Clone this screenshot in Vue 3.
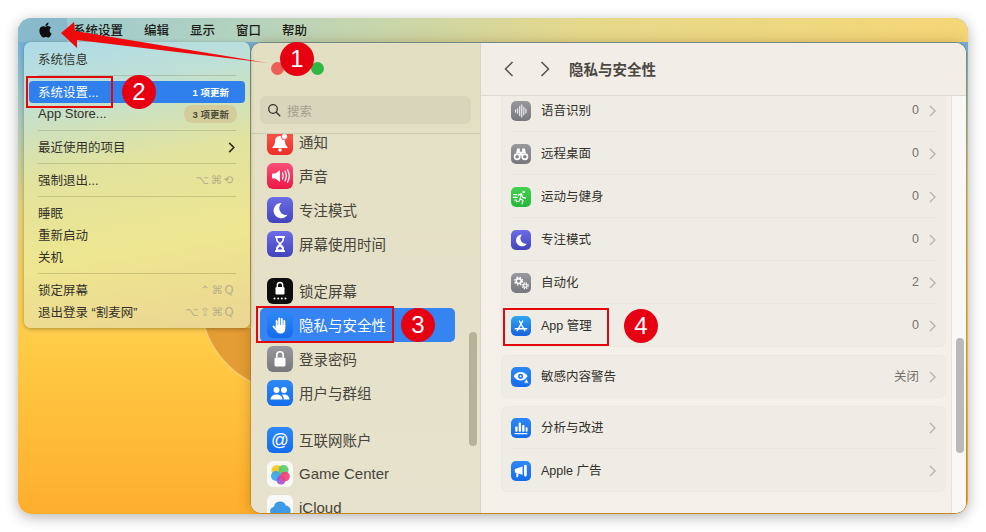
<template>
  <div class="page">
    <div class="screen">
      <svg class="wave" viewBox="0 0 60 60" width="60" height="60">
        <path d="M14 0C20 20 36 42 60 54V0z" fill="#e49c34" />
        <path d="M14 0C20 20 36 42 60 54" fill="none" stroke="#f6cf6e" stroke-width="1.5" />
      </svg>

      <div class="menubar">
        <span class="apple">
          <svg viewBox="0 0 24 24" width="15" height="16"><path :d="appleLogo" fill="#0d0d0d" /></svg>
        </span>
        <span v-for="m in menubar" :key="m" class="bar-item">{{ m }}</span>
      </div>

      <div class="window">
        <aside class="sidebar">
          <div class="lights">
            <i class="light red"></i>
            <i class="light yellow"></i>
            <i class="light green"></i>
          </div>
          <div class="search">
            <svg viewBox="0 0 14 14" width="14" height="14">
              <circle cx="6" cy="6" r="4.3" fill="none" stroke="#33322c" stroke-width="1.3" />
              <path d="M9.2 9.2l3.6 3.6" stroke="#33322c" stroke-width="1.4" stroke-linecap="round" />
            </svg>
            <span>搜索</span>
          </div>
          <div class="side-list">
            <div
              v-for="item in sideItems"
              :key="item.label"
              class="side-item"
              :class="{ active: item.active, spaced: item.spaced }"
            >
              <span class="ico" :class="item.bg">
                <svg viewBox="0 0 26 26" v-html="icons[item.icon]"></svg>
              </span>
              <span class="side-label" :class="{ latin: item.latin }">{{ item.label }}</span>
            </div>
          </div>
          <div class="side-thumb"></div>
        </aside>

        <main class="content">
          <header class="titlebar">
            <svg viewBox="0 0 10 16" width="10" height="16"><path d="M8.5 1L1.5 8l7 7" class="nav" /></svg>
            <svg viewBox="0 0 10 16" width="10" height="16"><path d="M1.5 1l7 7-7 7" class="nav" /></svg>
            <h1>隐私与安全性</h1>
          </header>
          <div class="body">
            <div class="scroller">
              <section v-for="(card, i) in cards" :key="i" class="card">
                <div v-for="row in card" :key="row.label" class="row">
                  <span class="ico small" :class="row.bg">
                    <svg viewBox="0 0 26 26" v-html="icons[row.icon]"></svg>
                  </span>
                  <span class="row-label">{{ row.label }}</span>
                  <span class="row-value">{{ row.value }}</span>
                  <svg class="chev" viewBox="0 0 7 12" width="7" height="12"><path d="M1 1l5 5-5 5" /></svg>
                </div>
              </section>
            </div>
            <div class="gutter"><div class="thumb"></div></div>
          </div>
        </main>
      </div>
    </div>

    <div class="menu">
      <template v-for="(m, i) in appleMenu" :key="i">
        <div v-if="m.sep" class="sep"></div>
        <div v-else class="menu-item" :class="{ hot: m.hot }">
          <span class="menu-label" :class="{ latin: m.latin }">{{ m.label }}</span>
          <span v-if="m.badge" class="badge" :class="{ pill: !m.hot }">{{ m.badge }}</span>
          <span v-if="m.keys" class="keys">{{ m.keys }}</span>
          <svg v-if="m.more" viewBox="0 0 7 12" width="7" height="11"><path d="M1 1l5 5-5 5" fill="none" stroke="#2e2c20" stroke-width="1.7" /></svg>
        </div>
      </template>
    </div>

    <!-- 标注 -->
    <svg class="arrow" viewBox="0 0 986 532" width="986" height="532">
      <polygon points="61,33 74,22 75,31 268,63 77,40 77,48" fill="#ee0a0a" />
    </svg>
    <div class="mark box2"></div>
    <div class="mark box3"></div>
    <div class="mark box4"></div>
    <div class="num n1">1</div>
    <div class="num n2">2</div>
    <div class="num n3">3</div>
    <div class="num n4">4</div>
  </div>
</template>

<script setup>
const appleLogo =
  'M12.152 6.896c-.948 0-2.415-1.078-3.96-1.04-2.04.027-3.91 1.183-4.961 3.014-2.117 3.675-.546 9.103 1.519 12.09 1.013 1.454 2.208 3.09 3.792 3.039 1.52-.065 2.09-.987 3.935-.987 1.831 0 2.35.987 3.96.948 1.637-.026 2.676-1.48 3.676-2.948 1.156-1.688 1.636-3.325 1.662-3.415-.039-.013-3.182-1.221-3.22-4.857-.026-3.04 2.48-4.494 2.597-4.559-1.429-2.09-3.623-2.324-4.39-2.376-2-.156-3.675 1.09-4.61 1.09zM15.53 3.83c.843-1.012 1.4-2.427 1.245-3.83-1.207.052-2.662.805-3.532 1.818-.78.896-1.454 2.338-1.273 3.714 1.338.104 2.715-.688 3.559-1.701'

const menubar = ['系统设置', '编辑', '显示', '窗口', '帮助']

const appleMenu = [
  { label: '系统信息' },
  { sep: true },
  { label: '系统设置...', badge: '1 项更新', hot: true },
  { label: 'App Store...', badge: '3 项更新', latin: true },
  { sep: true },
  { label: '最近使用的项目', more: true },
  { sep: true },
  { label: '强制退出...', keys: '⌥⌘⟲' },
  { sep: true },
  { label: '睡眠' },
  { label: '重新启动' },
  { label: '关机' },
  { sep: true },
  { label: '锁定屏幕', keys: '⌃⌘Q' },
  { label: '退出登录 “割麦网”', keys: '⌥⇧⌘Q' }
]

const icons = {
  bell: '<path d="M13 7c-3.6 0-5 2.8-5 5.6 0 2.8-1 4.2-2.6 5.6V19h15.2v-.8C19 16.8 18 15.400 18 12.600 18 9.800 16.600 7 13 7z" fill="#fff"/><circle cx="13" cy="21" r="1.7" fill="#fff"/><circle cx="17.500" cy="7.500" r="3.200" fill="#fff" stroke="#f6403a"/>',
  sound: '<path d="M5 10.500h3.500L13 7v12l-4.500-3.500H5z" fill="#fff"/><g fill="none" stroke="#fff" stroke-width="1.300" stroke-linecap="round"><path d="M15.500 10c1 1.900 1 4.100 0 6"/><path d="M18 8.300c1.700 3 1.700 6.400 0 9.400"/><path d="M20.500 6.800c2.300 4 2.300 8.400 0 12.400"/></g>',
  moon: '<path d="M14.500 6a7.600 7.600 0 1 0 6 11.800 6.900 6.900 0 0 1-6-11.800z" fill="#fff"/>',
  hourglass: '<path d="M8 5h10v1.800h-1v1.700c0 2.100-2 3.300-3 4.500 1 1.200 3 2.400 3 4.500v1.700h1V21H8v-1.800h1v-1.700c0-2.100 2-3.300 3-4.500-1-1.200-3-2.400-3-4.500V6.800H8z" fill="#fff"/><path d="M10.600 7h4.800v1.500c0 1.300-1.500 2.300-2.400 3.200-.900-.900-2.400-1.900-2.400-3.200zM10.800 18.500c.2-1.200 1.300-2 2.200-2.900.900.900 2 1.700 2.200 2.900z" fill="#5151cc"/>',
  lockBlack: '<rect x="8.500" y="9" width="9" height="7.500" rx="1.200" fill="#fff"/><path d="M10.300 9V7.200a2.700 2.700 0 0 1 5.400 0V9" fill="none" stroke="#fff" stroke-width="1.400"/><g fill="#fff"><circle cx="7.500" cy="20.500" r="1"/><circle cx="11.200" cy="20.500" r="1"/><circle cx="14.800" cy="20.500" r="1"/><circle cx="18.500" cy="20.500" r="1"/></g>',
  lock: '<rect x="7.500" y="11.500" width="11" height="9" rx="1.500" fill="#fff"/><path d="M9.800 11.500V9a3.200 3.200 0 0 1 6.400 0v2.500" fill="none" stroke="#fff" stroke-width="1.600"/>',
  hand: '<g stroke="#fff" stroke-width="1.900" stroke-linecap="round" fill="none"><path d="M9.700 14V9"/><path d="M12.200 13V6.500"/><path d="M14.800 13V7"/><path d="M17.300 14V9"/><path d="M9 17.500l-2.500-3"/></g><path d="M8.800 13h9.500v3.500c0 3.300-1.800 5-4.700 5s-4.200-1.500-4.800-4z" fill="#fff"/>',
  users: '<g fill="#fff"><circle cx="9.500" cy="10" r="3"/><circle cx="17" cy="10" r="3"/><path d="M3.500 19.500c.2-3.400 2.600-5 6-5s5.800 1.600 6 5z"/><path d="M16.800 19.500c0-2-.700-3.700-2-4.700.7-.2 1.400-.300 2.200-.300 3.200 0 5.300 1.600 5.500 5z"/></g>',
  at: '<text x="13" y="18.800" text-anchor="middle" font-family="Liberation Sans, sans-serif" font-size="17.500" fill="#fff">@</text>',
  game: '<circle cx="10" cy="9.500" r="5.500" fill="#f9c935"/><circle cx="16.500" cy="9" r="5" fill="#58c96b" opacity=".9"/><circle cx="9" cy="15" r="5" fill="#2fa8f0" opacity=".9"/><circle cx="14" cy="19" r="4.500" fill="#a44fd6" opacity=".9"/><circle cx="18" cy="15.500" r="4.800" fill="#f23e72" opacity=".9"/>',
  cloud: '<path d="M7.500 21a4.700 4.700 0 0 1-.6-9.300 6.300 6.300 0 0 1 12-1.300A5.400 5.400 0 0 1 19.500 21z" fill="#3c9ae6"/>',
  wave: '<g stroke="#fff" stroke-width="1.300" stroke-linecap="round"><path d="M6 11.500v3"/><path d="M8.700 10v6"/><path d="M11.400 7v12"/><path d="M14 5v16"/><path d="M16.700 8v10"/><path d="M19.400 10.500v5"/></g>',
  binoculars: '<g fill="#fff"><path d="M8 6h3.500v6H6.500zM14.500 6H18l1.500 6h-5z"/><circle cx="8" cy="16.500" r="4.500"/><circle cx="18" cy="16.500" r="4.500"/><rect x="11" y="10" width="4" height="5"/></g><circle cx="8" cy="16.500" r="2.300" fill="#85858d"/><circle cx="18" cy="16.500" r="2.300" fill="#85858d"/>',
  run: '<circle cx="16.500" cy="6.500" r="1.700" fill="#fff"/><g fill="none" stroke="#fff" stroke-width="1.600" stroke-linecap="round" stroke-linejoin="round"><path d="M9.500 10.500l4-1.500 2 4.500 3.500 1"/><path d="M13.500 9l-1.500 6 3.500 2.500-1 4.500"/><path d="M12 15.500l-1.500 3-3.500.5"/><path d="M3.500 10h4M3 13.500h5M5 17h2"/></g>',
  gears: '<circle cx="10" cy="10.500" r="3.200" fill="none" stroke="#fff" stroke-width="2"/><circle cx="10" cy="10.500" r="5" fill="none" stroke="#fff" stroke-width="1.800" stroke-dasharray="2 2"/><circle cx="18.500" cy="16.500" r="2.300" fill="none" stroke="#fff" stroke-width="1.700"/><circle cx="18.500" cy="16.500" r="3.900" fill="none" stroke="#fff" stroke-width="1.500" stroke-dasharray="1.600 1.500"/>',
  store: '<g stroke="#fff" stroke-width="1.800" stroke-linecap="round"><path d="M10.800 6.500L18 19"/><path d="M15.200 6.500L8 19"/><path d="M5.500 16.500h15"/></g>',
  eye: '<path d="M3.500 12c2.400-3.800 5.700-5.500 9-5.500s6.600 1.700 9 5.500c-2.400 3.800-5.700 5.500-9 5.500S5.900 15.800 3.500 12z" fill="#fff"/><circle cx="12.500" cy="12" r="3.300" fill="#1873ef"/><circle cx="12.500" cy="12" r="1.300" fill="#fff"/><path d="M20 15l3.500 6h-7z" fill="#fff" stroke="#1873ef"/>',
  bars: '<g fill="#fff"><rect x="5.500" y="11" width="3" height="7" rx="1"/><rect x="10" y="6" width="3" height="12" rx="1"/><rect x="14.500" y="9" width="3" height="9" rx="1"/><rect x="19" y="12" width="2.500" height="6" rx="1"/><rect x="4.500" y="19.500" width="17" height="1.500" rx=".7"/></g>',
  horn: '<g fill="#fff"><path d="M5 10.500l10-3.500v11L5 15z"/><rect x="17" y="5" width="3.500" height="15" rx="1.500"/><path d="M7 15.500l3 1-1 4.500H7z"/></g>'
}

const sideItems = [
  { label: '通知', icon: 'bell', bg: 'bg-red' },
  { label: '声音', icon: 'sound', bg: 'bg-pink' },
  { label: '专注模式', icon: 'moon', bg: 'bg-indigo' },
  { label: '屏幕使用时间', icon: 'hourglass', bg: 'bg-indigo' },
  { label: '锁定屏幕', icon: 'lockBlack', bg: 'bg-black', spaced: true },
  { label: '隐私与安全性', icon: 'hand', bg: 'bg-blue', active: true },
  { label: '登录密码', icon: 'lock', bg: 'bg-grey' },
  { label: '用户与群组', icon: 'users', bg: 'bg-blue' },
  { label: '互联网账户', icon: 'at', bg: 'bg-blue', spaced: true },
  { label: 'Game Center', icon: 'game', bg: 'bg-white', latin: true },
  { label: 'iCloud', icon: 'cloud', bg: 'bg-white', latin: true }
]

const cards = [
  [
    { label: '语音识别', icon: 'wave', bg: 'bg-grey', value: '0' },
    { label: '远程桌面', icon: 'binoculars', bg: 'bg-grey', value: '0' },
    { label: '运动与健身', icon: 'run', bg: 'bg-green', value: '0' },
    { label: '专注模式', icon: 'moon', bg: 'bg-indigo', value: '0' },
    { label: '自动化', icon: 'gears', bg: 'bg-grey', value: '2' },
    { label: 'App 管理', icon: 'store', bg: 'bg-sky', value: '0' }
  ],
  [{ label: '敏感内容警告', icon: 'eye', bg: 'bg-blue', value: '关闭' }],
  [
    { label: '分析与改进', icon: 'bars', bg: 'bg-blue', value: '' },
    { label: 'Apple 广告', icon: 'horn', bg: 'bg-blue', value: '' }
  ]
]
</script>

<style>
html,
body {
  margin: 0;
  background: #fff;
}
</style>

<style scoped>
.page {
  position: relative;
  width: 986px;
  height: 532px;
  padding: 18px;
  box-sizing: border-box;
  overflow: hidden;
  background: #fff;
  font-family: "Liberation Sans", "Noto Sans CJK SC", sans-serif;
  font-size: 12.5px;
  color: #33312a;
}

.screen {
  position: relative;
  width: 950px;
  height: 496px;
  border-radius: 14px;
  overflow: hidden;
  background: linear-gradient(180deg, #6db2dc 4%, #a9c8bb 20%, #e5d27c 38%, #ffcc47 65%, #feae2c 100%);
  box-shadow: 0 3px 14px rgba(0, 0, 0, 0.3);
}

.wave {
  position: absolute;
  left: 173px;
  top: 310px;
}

.menubar {
  position: relative;
  display: flex;
  align-items: center;
  gap: 21px;
  height: 24px;
  font-weight: 500;
  color: #1b1b18;
  background: linear-gradient(90deg, #97c8d4, #b6d3bd 25%, #e6d98b 60%, #f5d676 100%);
}

.bar-item {
  margin-top: -2px;
}

.apple {
  display: flex;
  align-items: center;
  height: 24px;
  padding: 0 14px 0 20px;
  margin-right: -15px;
  background: #88bacb;
}

.window {
  position: relative;
  display: flex;
  height: 470px;
  margin: 1px 2px 0 233px;
  border-radius: 10px;
  overflow: hidden;
  background: #f4f0e9;
  box-shadow: 0 0 0 0.5px rgba(110, 80, 10, 0.55), 0 0 14px rgba(120, 70, 0, 0.35);
}

.sidebar {
  position: relative;
  display: flex;
  flex-direction: column;
  flex: none;
  width: 230px;
  box-sizing: border-box;
  background: linear-gradient(180deg, #e3dfc2, #e7e2cd);
  border-right: 1px solid #d9d5c4;
}

.lights {
  display: flex;
  gap: 7px;
  height: 53px;
  padding: 19px 0 0 20px;
  box-sizing: border-box;
}

.light {
  width: 13px;
  height: 13px;
  border-radius: 50%;
}

.red {
  background: #ec5f57;
}

.yellow {
  background: #f5bf4f;
}

.green {
  background: #2fb944;
}

.search {
  display: flex;
  align-items: center;
  gap: 6px;
  flex: none;
  width: 211px;
  height: 28px;
  margin-left: 9px;
  padding-left: 7px;
  box-sizing: border-box;
  border-radius: 6px;
  background: #d9d5ba;
  color: #a4a08c;
}

.side-list {
  flex: 1;
  min-height: 0;
  margin-top: 9px;
  padding: 0 0 0 9px;
  overflow: hidden;
  border-top: 1px solid #cfcbb2;
}

.side-item {
  display: flex;
  align-items: center;
  gap: 6px;
  width: 195px;
  height: 34px;
  padding-left: 7px;
  box-sizing: border-box;
  border-radius: 5px;
  font-size: 14.5px;
  color: #47453b;
  position: relative;
  top: -9px;
}

.side-label {
  margin-top: -2px;
}

.side-label.latin {
  font-size: 15px;
}

.side-item.spaced {
  margin-top: 13px;
}

.side-item.active {
  background: #3584f2;
  color: #fff;
}

.side-thumb {
  position: absolute;
  left: 218px;
  top: 289px;
  width: 8px;
  height: 114px;
  border-radius: 4px;
  background: #b6b29c;
}

.ico {
  display: flex;
  flex: none;
  width: 26px;
  height: 26px;
  border-radius: 6px;
}

.ico.small {
  width: 20px;
  height: 20px;
  border-radius: 5px;
}

.ico svg {
  width: 100%;
  height: 100%;
}

.bg-red {
  background: linear-gradient(180deg, #fa5a50, #ee2e28);
}

.bg-pink {
  background: linear-gradient(180deg, #fb5078, #ec1748);
}

.bg-indigo {
  background: linear-gradient(180deg, #6c6ce8, #4343bb);
}

.bg-black {
  background: #0d0d0d;
}

.bg-blue {
  background: linear-gradient(180deg, #2d88f5, #146cec);
}

.bg-grey {
  background: linear-gradient(180deg, #98989e, #77777e);
}

.bg-white {
  background: #f8f8f6;
}

.bg-green {
  background: linear-gradient(180deg, #43d250, #24b738);
}

.bg-sky {
  background: linear-gradient(180deg, #2fa6f2, #1662dd);
}

.content {
  display: flex;
  flex-direction: column;
  flex: 1;
  min-width: 0;
}

.titlebar {
  display: flex;
  align-items: center;
  height: 52px;
  padding-left: 23px;
  flex: none;
  gap: 26px;
  background: #f2ede6;
  border-bottom: 1px solid #dedad2;
}

.titlebar h1 {
  margin: -2px 0 0 -7px;
  font-size: 14.5px;
  font-weight: 700;
  color: #4a4843;
}

.nav {
  fill: none;
  stroke: #55534e;
  stroke-width: 1.5;
}

.body {
  display: flex;
  flex: 1;
  min-height: 0;
}

.scroller {
  flex: 1;
  min-width: 0;
  overflow: hidden;
  padding: 0 5px 0 20px;
}

.card {
  display: flex;
  flex-direction: column;
  border-radius: 7px;
  background: #efece5;
  box-shadow: inset 0 0 0 1px #ebe8e0;
  margin-bottom: 8px;
}

.card:first-child {
  margin-top: -7px;
}

.row {
  display: flex;
  align-items: center;
  gap: 10px;
  height: 43px;
  margin: 0 10px;
  color: #32302b;
}

.row + .row {
  box-shadow: 0 -1px 0 #e9e6de;
}

.row-label {
  flex: 1;
  margin-top: -2px;
}

.row-value {
  margin-top: -2px;
  color: #75736d;
}

.chev {
  flex: none;
  fill: none;
  stroke: #b7b4ac;
  stroke-width: 1.4;
}

.gutter {
  flex: none;
  width: 15px;
  padding: 242px 0 0 4px;
  box-sizing: border-box;
  background: #f9f8f6;
  border-left: 1px solid #e6e3dc;
}

.thumb {
  width: 8px;
  height: 115px;
  border-radius: 4px;
  background: #b9b9b9;
}

.menu {
  position: absolute;
  left: 24px;
  top: 42px;
  display: flex;
  flex-direction: column;
  width: 226px;
  padding: 6px 0 5px;
  box-sizing: border-box;
  border-radius: 7px;
  background: linear-gradient(170deg, #aedbe9 0%, #bfe0d5 18%, #e2e39f 42%, #eee690 70%, #ebd592 100%);
  box-shadow: 0 1px 4px rgba(0, 0, 0, 0.3);
  color: #33312a;
}

.sep {
  height: 1px;
  margin: 5px 14px;
  background: rgba(120, 115, 70, 0.28);
}

.menu-item {
  display: flex;
  align-items: center;
  justify-content: space-between;
  height: 22px;
  margin: 0 5px;
  padding: 0 10px 0 9px;
  border-radius: 4px;
}

.menu-label {
  margin-top: -2px;
}

.menu-label.latin {
  font-size: 13px;
}

.menu-item.hot {
  background: #2f80ed;
  color: #fff;
}

.badge {
  font-size: 9.5px;
  font-weight: 700;
  margin-right: 6px;
}

.badge.pill {
  padding: 2px 8px 2px 9px;
  margin-right: -2px;
  border-radius: 8px;
  background: #d3cd9c;
  color: #4f4d3c;
}

.keys {
  font-family: "DejaVu Sans", sans-serif;
  font-size: 11.5px;
  letter-spacing: 1.5px;
  color: #b7b088;
}

.arrow {
  position: absolute;
  left: 0;
  top: 0;
  pointer-events: none;
}

.mark {
  position: absolute;
  box-sizing: border-box;
  border: 2.5px solid #e4080e;
}

.box2 {
  left: 26px;
  top: 76px;
  width: 87px;
  height: 32px;
}

.box3 {
  left: 256px;
  top: 306px;
  width: 138px;
  height: 37px;
}

.box4 {
  left: 503px;
  top: 308px;
  width: 106px;
  height: 38px;
}

.num {
  position: absolute;
  display: flex;
  align-items: center;
  justify-content: center;
  width: 34px;
  height: 34px;
  border-radius: 50%;
  background: #e60012;
  color: #fff;
  font-size: 24px;
}

.n1 {
  left: 280px;
  top: 42px;
}

.n2 {
  left: 122px;
  top: 75px;
}

.n3 {
  left: 401px;
  top: 308px;
}

.n4 {
  left: 624px;
  top: 309px;
}
</style>
